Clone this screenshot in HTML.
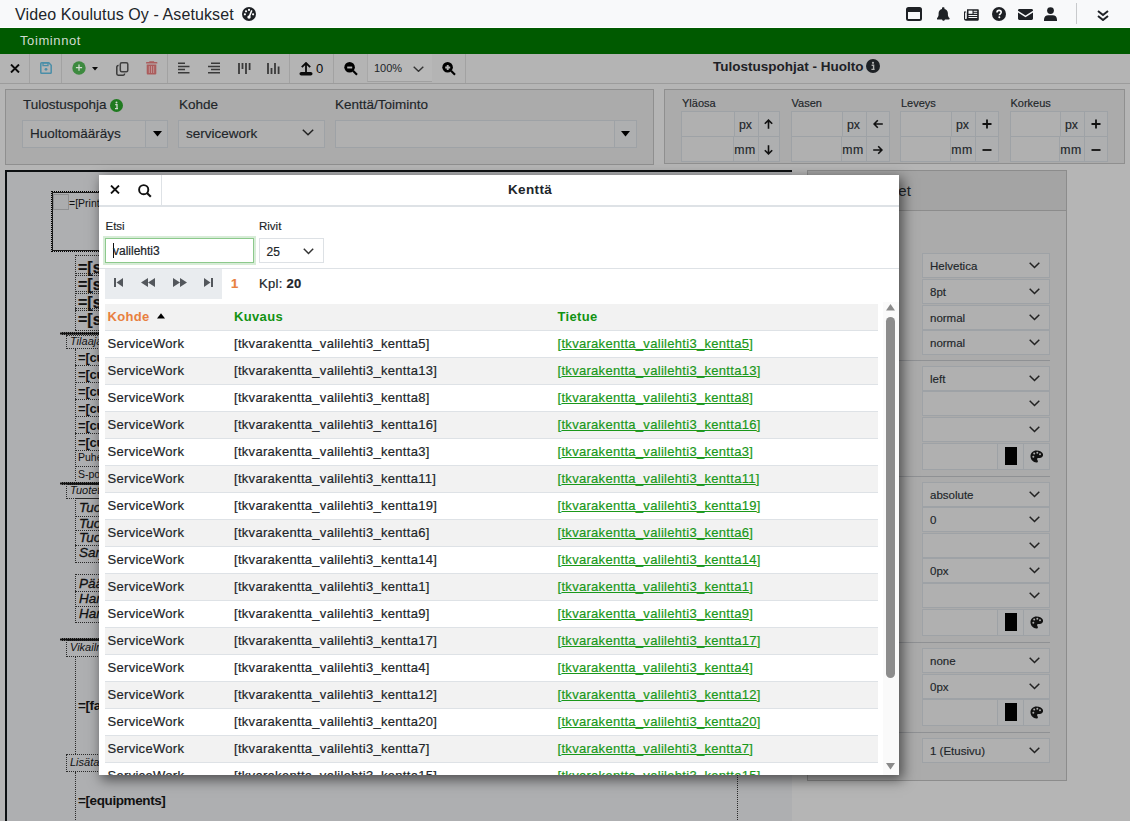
<!DOCTYPE html>
<html><head><meta charset="utf-8">
<style>
*{box-sizing:border-box;margin:0;padding:0}
html,body{width:1130px;height:821px;overflow:hidden}
body{position:relative;background:#b5b5b5;font-family:"Liberation Sans",sans-serif;color:#212529}
.a{position:absolute}
svg{display:block}
/* header */
#hdr{left:0;top:0;width:1130px;height:28px;background:#f8f9fa;border-bottom:1px solid #fff}
#title{left:15px;top:5px;font-size:16px;line-height:20px;color:#212529;letter-spacing:0.1px}
#green{left:0;top:28px;width:1130px;height:26px;background:#005a00}
#toim{left:20px;top:33px;font-size:13px;line-height:15px;color:#d0dbd0;letter-spacing:.6px}
/* toolbar */
#tb{left:0;top:54px;width:1130px;height:30px;background:#b4b4b4;border-bottom:1px solid #9c9c9c}
.dv{top:54px;width:1px;height:29px;background:#a2a2a2}
/* panels */
.pnl{background:#ababab;border:1px solid #8f8f8f}
.lbl{font-size:13.5px;line-height:16px;color:#212529;-webkit-text-stroke:.15px currentColor}
.sel{background:#b0b0b0;border:1px solid #9ea2a6}
.sm{font-size:11.5px;line-height:14px;color:#212529;-webkit-text-stroke:.15px currentColor}
.ig{border:1px solid #9ea2a6;background:#b0b0b0}
.cv{font-family:"Liberation Sans",sans-serif;line-height:14px;color:#111}
.cvb{font-size:16px;font-weight:bold;line-height:17px;color:#111;-webkit-text-stroke:.2px #111}
.cvb3{font-size:13px;font-weight:bold;line-height:15px;color:#111;letter-spacing:-.2px}
.cvb2{font-size:13.5px;font-weight:bold;line-height:15px;color:#111;letter-spacing:-.4px}
.cvi{font-size:11px;font-style:italic;line-height:13px;color:#111}
.cvi2{font-size:13.5px;font-style:italic;line-height:14px;color:#111;-webkit-text-stroke:.3px #111}
.ad{background:#aeafb0;border-left:1px solid #9ea2a6}

#modal{left:99px;top:175px;width:800px;height:600px;background:#fff;box-shadow:3px 4px 12px 1px rgba(0,0,0,.55);overflow:hidden}
.mt{font-size:13px;line-height:15px;color:#212529;letter-spacing:.3px;-webkit-text-stroke:.2px currentColor}
.ml{font-size:11.5px;line-height:13px;color:#212529;-webkit-text-stroke:.15px currentColor}
.th{font-size:13px;line-height:15px;font-weight:bold;letter-spacing:.35px}
.lnk{color:#1a981a}
.lnk u{text-decoration:underline;text-decoration-thickness:1px;text-underline-offset:1px}
</style></head><body>
<div id="hdr" class="a"></div>
<div id="title" class="a">Video Koulutus Oy - Asetukset</div>
<div id="green" class="a"></div>
<div id="toim" class="a">Toiminnot</div>

<div id="tb" class="a"></div>

<!-- header icons -->
<svg class="a" style="left:242px;top:6.5px" width="14" height="14" viewBox="0 0 14 14"><circle cx="7" cy="7" r="7" fill="#1e2125"/><circle cx="7" cy="2.9" r="1.1" fill="#fff"/><circle cx="4" cy="4.3" r="1.1" fill="#fff"/><circle cx="2.9" cy="7.3" r="1.1" fill="#fff"/><circle cx="11.1" cy="7.3" r="1.1" fill="#fff"/><path d="M9.8 3.4 L7.3 9.6" stroke="#fff" stroke-width="1.5"/><circle cx="7" cy="10.1" r="1.7" fill="#fff"/></svg>

<svg class="a" style="left:906px;top:7px" width="16" height="14" viewBox="0 0 16 14"><rect x="1" y="1" width="14" height="12" rx="1.5" fill="none" stroke="#1e2125" stroke-width="2"/><rect x="1" y="1" width="14" height="4" fill="#1e2125"/></svg>
<svg class="a" style="left:936.5px;top:7px" width="13" height="14" viewBox="0 0 13 14"><path d="M6.5 0.3c.6 0 1 .4 1 1v.6c2 .4 3.4 2.2 3.4 4.3v1.2c0 1.3.5 2.5 1.3 3.4l.3.4c.2.2.2.5.1.8-.1.3-.4.4-.7.4H.6c-.3 0-.6-.2-.7-.4-.1-.3-.1-.6.1-.8l.3-.4c.8-.9 1.3-2.1 1.3-3.4V6.2c0-2.1 1.5-3.900 3.4-4.3v-.6c0-.6.4-1 1-1zM8 12.2c0 .8-.7 1.5-1.5 1.5S5 13 5 12.2z" fill="#1e2125"/></svg>
<svg class="a" style="left:964px;top:7.5px" width="15" height="13" viewBox="0 0 15 13"><path d="M3 1.2h10.8c.6 0 1 .4 1 1v9c0 .9-.7 1.6-1.6 1.6H2c-1.1 0-2-.9-2-2V3.5h2.2v7.3h.8V1.2z" fill="#1e2125"/><rect x="4.5" y="2.6" width="4" height="3.2" fill="#f8f9fa"/><rect x="9.6" y="2.8" width="3.6" height="1" fill="#f8f9fa"/><rect x="9.6" y="4.8" width="3.6" height="1" fill="#f8f9fa"/><rect x="4.5" y="7" width="8.7" height="1" fill="#f8f9fa"/><rect x="4.5" y="9" width="8.7" height="1" fill="#f8f9fa"/><rect x="1" y="4.5" width="0.9" height="6.5" fill="#f8f9fa"/></svg>
<svg class="a" style="left:991.5px;top:7px" width="14" height="14" viewBox="0 0 14 14"><circle cx="7" cy="7" r="7" fill="#1e2125"/><path d="M5 5.4c0-1.2.9-2 2.1-2 1.2 0 2.1.8 2.1 1.9 0 1.5-1.8 1.5-1.8 2.9" stroke="#fff" stroke-width="1.6" fill="none"/><circle cx="7.3" cy="10.2" r="1" fill="#fff"/></svg>
<svg class="a" style="left:1017.5px;top:8.5px" width="15" height="11" viewBox="0 0 15 11"><path d="M1.4 0h12.2c.8 0 1.4.6 1.4 1.4v.4L7.5 6.6 0 1.8v-.4C0 .6.6 0 1.4 0zM0 3.4l7.5 4.8L15 3.4v6.2c0 .8-.6 1.4-1.4 1.4H1.4C.6 11 0 10.4 0 9.6z" fill="#1e2125"/></svg>
<svg class="a" style="left:1044px;top:7px" width="13" height="14" viewBox="0 0 13 14"><circle cx="6.5" cy="3.6" r="3.4" fill="#1e2125"/><path d="M0 14v-1.6C0 9.9 2 8.3 4.2 8.3h4.6c2.3 0 4.2 1.6 4.2 4.1V14z" fill="#1e2125"/></svg>
<div class="a" style="left:1076px;top:3px;width:1px;height:21px;background:#c8cacc"></div>
<svg class="a" style="left:1097px;top:9.5px" width="12" height="11" viewBox="0 0 12 11"><path d="M1 1l5 4 5-4M1 6l5 4 5-4" stroke="#1e2125" stroke-width="2" fill="none"/></svg>

<!-- toolbar -->
<div class="a dv" style="left:29px"></div>
<div class="a dv" style="left:61px"></div>
<div class="a dv" style="left:167px"></div>
<div class="a dv" style="left:289px"></div>
<div class="a dv" style="left:333px"></div>
<div class="a dv" style="left:465px"></div>
<svg class="a" style="left:10px;top:63.5px" width="10" height="9" viewBox="0 0 10 9"><path d="M1 0.5l8 8M9 0.5l-8 8" stroke="#0a0a0a" stroke-width="1.9"/></svg>
<svg class="a" style="left:40px;top:62px" width="12" height="12" viewBox="0 0 12 12"><path d="M1.6 .8h7.2l2.4 2.4v7.2c0 .5-.4.8-.8.8H1.6c-.5 0-.8-.4-.8-.8V1.6c0-.5.4-.8.8-.8z" fill="none" stroke="#4a8ea8" stroke-width="1.5"/><rect x="3" y="1" width="5" height="2.6" fill="none" stroke="#4a8ea8" stroke-width="1.3"/><circle cx="6" cy="7.3" r="1.4" fill="#4a8ea8"/></svg>
<svg class="a" style="left:71.5px;top:61px" width="14" height="14" viewBox="0 0 14 14"><circle cx="7" cy="7" r="6.7" fill="#3d8a3f"/><path d="M7 3.6v6.2M3.9 6.7h6.2" stroke="#d2ddd2" stroke-width="1.3"/></svg>
<svg class="a" style="left:92px;top:66.8px" width="6" height="4" viewBox="0 0 6 4"><path d="M0 0h6L3 3.4z" fill="#0a0a0a"/></svg>
<svg class="a" style="left:115.5px;top:61.5px" width="13" height="14" viewBox="0 0 13 14"><rect x="4.3" y="0.8" width="7.5" height="9" rx="1.5" fill="none" stroke="#404040" stroke-width="1.5"/><path d="M2.6 3.6h-.4c-.8 0-1.4.6-1.4 1.4v6.8c0 .8.6 1.4 1.4 1.4h5c.8 0 1.4-.6 1.4-1.4v-.4" fill="none" stroke="#3a3a3a" stroke-width="1.5"/></svg>
<svg class="a" style="left:146px;top:61.3px" width="12" height="14" viewBox="0 0 12 14"><path d="M3.6 .2h4.2l.6 .9h2.3c.4 0 .7.3.7.7v.4c0 .2-.2.4-.4.4H.4C.2 2.6 0 2.400 0 2.200v-.4c0-.4.3-.7.7-.7H3z" fill="#ab5c5c"/><path d="M.7 3.600h9.600v9c0 .5-.4.9-.9.9H1.600c-.5 0-.9-.4-.9-.9z" fill="#ab5c5c"/><path d="M3.300 5v7M5.500 5v7M7.700 5v7" stroke="#c39a9a" stroke-width="0.9"/></svg>
<svg class="a" style="left:177.5px;top:62px" width="12" height="12" viewBox="0 0 12 12"><path d="M0 1.2h7M0 4.4h11.5M0 7.6h7M0 10.8h11.5" stroke="#3a3a3a" stroke-width="1.5"/></svg>
<svg class="a" style="left:207.5px;top:62px" width="12" height="12" viewBox="0 0 12 12"><path d="M3 1.2h9M0 4.4h12M3 7.6h9M0 10.8h12" stroke="#3a3a3a" stroke-width="1.5"/></svg>
<svg class="a" style="left:237.5px;top:63px" width="13" height="11" viewBox="0 0 13 11"><path d="M1 0v11M4.5 0v6M8 0v11M11.6 0v7" stroke="#3a3a3a" stroke-width="1.8"/></svg>
<svg class="a" style="left:266.5px;top:63px" width="13" height="11" viewBox="0 0 13 11"><path d="M1 0v11M4.5 5v6M8 0v11M11.6 3.5v7.5" stroke="#3a3a3a" stroke-width="1.8"/></svg>
<svg class="a" style="left:299px;top:61.5px" width="14" height="14" viewBox="0 0 14 14"><path d="M7 1v9" stroke="#0a0a0a" stroke-width="1.8"/><path d="M2.8 5.2L7 1l4.2 4.2" stroke="#0a0a0a" stroke-width="1.8" fill="none"/><rect x="0.5" y="10" width="13" height="3.6" rx="1.8" fill="#0a0a0a"/></svg>
<div class="a" style="left:316px;top:61px;font-size:13px;line-height:15px;color:#0a0a0a">0</div>
<svg class="a" style="left:343.5px;top:61.5px" width="14" height="14" viewBox="0 0 14 14"><circle cx="5.6" cy="5.3" r="5.3" fill="#000"/><path d="M3.2 5.5h5" stroke="#b4b4b4" stroke-width="1.9"/><path d="M9 8.8l4 4" stroke="#000" stroke-width="2.1"/></svg>
<div class="a" style="left:367px;top:54px;width:65px;height:28px;background:#b8b8b8;border-left:1px solid #a8a8a8;border-bottom:1px solid #a0a0a0"></div>
<div class="a" style="left:374px;top:62px;font-size:11px;line-height:13px;color:#212529">100%</div>
<svg class="a" style="left:413px;top:66px" width="11" height="6" viewBox="0 0 11 6"><path d="M.7.7l4.8 4.6L10.3.7" stroke="#333" stroke-width="1.4" fill="none"/></svg>
<svg class="a" style="left:442px;top:61.5px" width="14" height="14" viewBox="0 0 14 14"><circle cx="5.6" cy="5.3" r="5.3" fill="#000"/><path d="M3.2 5.5h5M5.7 3v5" stroke="#b4b4b4" stroke-width="1.9"/><path d="M9 8.8l4 4" stroke="#000" stroke-width="2.1"/></svg>
<div class="a" style="left:713px;top:59px;font-size:13.5px;line-height:16px;font-weight:bold;color:#1e2125">Tulostuspohjat - Huolto</div>
<svg class="a" style="left:866px;top:59px" width="14" height="14" viewBox="0 0 14 14"><circle cx="7" cy="7" r="7" fill="#1e2125"/><circle cx="7" cy="3.8" r="1.1" fill="#b4b4b4"/><path d="M5.6 6.2h2v4.2M5.4 10.4h3.2" stroke="#b4b4b4" stroke-width="1.4" fill="none"/></svg>

<!-- left form panel -->
<div class="a pnl" style="left:5px;top:89px;width:649px;height:76px"></div>
<div class="a lbl" style="left:23px;top:97px">Tulostuspohja</div>
<svg class="a" style="left:110px;top:99px" width="13" height="13" viewBox="0 0 13 13"><circle cx="6.5" cy="6.5" r="6.5" fill="#1f7a1f"/><circle cx="6.5" cy="3.5" r="1" fill="#cfd8cf"/><path d="M5.2 5.7h1.8v3.9M5 9.6h3" stroke="#cfd8cf" stroke-width="1.3" fill="none"/></svg>
<div class="a lbl" style="left:179px;top:97px">Kohde</div>
<div class="a lbl" style="left:335px;top:97px">Kenttä/Toiminto</div>
<div class="a sel" style="left:22px;top:120px;width:146px;height:28px"></div>
<div class="a" style="left:145px;top:121px;width:22px;height:26px;background:#aeafb0;border-left:1px solid #9ea2a6"></div>
<svg class="a" style="left:152.5px;top:131px" width="9" height="6" viewBox="0 0 9 6"><path d="M0 0h9L4.5 5.4z" fill="#000"/></svg>
<div class="a lbl" style="left:30px;top:126px">Huoltomääräys</div>
<div class="a sel" style="left:178px;top:120px;width:147px;height:28px"></div>
<div class="a lbl" style="left:186px;top:126px">servicework</div>
<svg class="a" style="left:302px;top:129px" width="12" height="7" viewBox="0 0 12 7"><path d="M.8.8l5.2 5 5.2-5" stroke="#222" stroke-width="1.5" fill="none"/></svg>
<div class="a sel" style="left:335px;top:120px;width:302px;height:28px"></div>
<div class="a" style="left:614px;top:121px;width:22px;height:26px;background:#aeafb0;border-left:1px solid #9ea2a6"></div>
<svg class="a" style="left:621px;top:131px" width="9" height="6" viewBox="0 0 9 6"><path d="M0 0h9L4.5 5.4z" fill="#000"/></svg>

<!-- right position panel -->
<div class="a pnl" style="left:664px;top:89px;width:461px;height:75px"></div>
<div class="a sm" style="left:682px;top:95.5px;font-size:11px">Yläosa</div>
<div class="a ig" style="left:681px;top:111px;width:98.5px;height:26px"></div>
<div class="a ad" style="left:733.5px;top:112px;width:24.0px;height:24px"></div>
<div class="a ad" style="left:757.5px;top:112px;width:21.0px;height:24px"></div>
<div class="a ig" style="left:681px;top:136px;width:98.5px;height:26px"></div>
<div class="a ad" style="left:732.5px;top:137px;width:25.0px;height:24px"></div>
<div class="a ad" style="left:757.5px;top:137px;width:21.0px;height:24px"></div>
<div class="a sm" style="left:733.5px;top:117.5px;width:24px;text-align:center;font-size:12.3px">px</div>
<div class="a sm" style="left:732.5px;top:142.5px;width:25px;text-align:center;letter-spacing:.4px;font-size:12.3px">mm</div>
<div class="a sm" style="left:791.5px;top:95.5px;font-size:11px">Vasen</div>
<div class="a ig" style="left:790.5px;top:111px;width:99.0px;height:26px"></div>
<div class="a ad" style="left:841.5px;top:112px;width:24.0px;height:24px"></div>
<div class="a ad" style="left:865.5px;top:112px;width:23.0px;height:24px"></div>
<div class="a ig" style="left:790.5px;top:136px;width:99.0px;height:26px"></div>
<div class="a ad" style="left:840.5px;top:137px;width:25.0px;height:24px"></div>
<div class="a ad" style="left:865.5px;top:137px;width:23.0px;height:24px"></div>
<div class="a sm" style="left:841.5px;top:117.5px;width:24px;text-align:center;font-size:12.3px">px</div>
<div class="a sm" style="left:840.5px;top:142.5px;width:25px;text-align:center;letter-spacing:.4px;font-size:12.3px">mm</div>
<div class="a sm" style="left:901px;top:95.5px;font-size:11px">Leveys</div>
<div class="a ig" style="left:900px;top:111px;width:99px;height:26px"></div>
<div class="a ad" style="left:950.5px;top:112px;width:24.0px;height:24px"></div>
<div class="a ad" style="left:974.5px;top:112px;width:23.5px;height:24px"></div>
<div class="a ig" style="left:900px;top:136px;width:99px;height:26px"></div>
<div class="a ad" style="left:949.5px;top:137px;width:25.0px;height:24px"></div>
<div class="a ad" style="left:974.5px;top:137px;width:23.5px;height:24px"></div>
<div class="a sm" style="left:950.5px;top:117.5px;width:24px;text-align:center;font-size:12.3px">px</div>
<div class="a sm" style="left:949.5px;top:142.5px;width:25px;text-align:center;letter-spacing:.4px;font-size:12.3px">mm</div>
<div class="a sm" style="left:1010.5px;top:95.5px;font-size:11px">Korkeus</div>
<div class="a ig" style="left:1009.5px;top:111px;width:98.5px;height:26px"></div>
<div class="a ad" style="left:1059.5px;top:112px;width:24.0px;height:24px"></div>
<div class="a ad" style="left:1083.5px;top:112px;width:23.5px;height:24px"></div>
<div class="a ig" style="left:1009.5px;top:136px;width:98.5px;height:26px"></div>
<div class="a ad" style="left:1058.5px;top:137px;width:25.0px;height:24px"></div>
<div class="a ad" style="left:1083.5px;top:137px;width:23.5px;height:24px"></div>
<div class="a sm" style="left:1059.5px;top:117.5px;width:24px;text-align:center;font-size:12.3px">px</div>
<div class="a sm" style="left:1058.5px;top:142.5px;width:25px;text-align:center;letter-spacing:.4px;font-size:12.3px">mm</div>
<svg class="a" style="left:763.5px;top:119px" width="10" height="10" viewBox="0 0 10 10"><path d="M4.5 9.8V1.2M.8 4.8L4.5 1.1l3.7 3.7" stroke="#111" stroke-width="1.6" fill="none"/></svg>
<svg class="a" style="left:763.5px;top:144.5px" width="10" height="10" viewBox="0 0 10 10"><path d="M4.5 0.2v8.6M.8 5.2l3.7 3.7 3.7-3.7" stroke="#111" stroke-width="1.6" fill="none"/></svg>
<svg class="a" style="left:872.5px;top:119px" width="10" height="10" viewBox="0 0 10 10"><path d="M9.8 5H1.2M4.8 1.3L1.1 5l3.7 3.7" stroke="#111" stroke-width="1.6" fill="none"/></svg>
<svg class="a" style="left:872.5px;top:144.5px" width="10" height="10" viewBox="0 0 10 10"><path d="M.2 5h8.6M5.2 1.3L8.9 5 5.2 8.7" stroke="#111" stroke-width="1.6" fill="none"/></svg>
<svg class="a" style="left:981.8px;top:119px" width="10" height="10" viewBox="0 0 10 10"><path d="M5 .5v9M.5 5h9" stroke="#111" stroke-width="1.8" fill="none"/></svg>
<svg class="a" style="left:981.8px;top:144.5px" width="10" height="10" viewBox="0 0 10 10"><path d="M.5 5h9" stroke="#111" stroke-width="1.8" fill="none"/></svg>
<svg class="a" style="left:1090.8px;top:119px" width="10" height="10" viewBox="0 0 10 10"><path d="M5 .5v9M.5 5h9" stroke="#111" stroke-width="1.8" fill="none"/></svg>
<svg class="a" style="left:1090.8px;top:144.5px" width="10" height="10" viewBox="0 0 10 10"><path d="M.5 5h9" stroke="#111" stroke-width="1.8" fill="none"/></svg>

<!-- canvas -->
<div class="a" style="left:5px;top:170px;width:787px;height:651px;background:#aeafb1;border-top:2px solid #0d1012;border-left:2px solid #0d1012"></div>
<div class="a" style="left:51px;top:191px;width:300px;height:61px;border:1px dotted #000"></div>
<div class="a" style="left:52px;top:192px;width:298px;height:59px;border:1px solid #1a1a1a"></div>
<div class="a" style="left:53px;top:194px;width:16px;height:16px;border:1px solid #8f9092;background:#abacae"></div>
<div class="a cv" style="left:69px;top:195.5px;font-size:10.5px">=[PrintHeader]</div>
<div class="a" style="left:75px;top:255px;width:400px;height:75px;border-left:1px dotted #2a2a2a;border-top:1px dotted #2a2a2a"></div>
<div class="a" style="left:75px;top:273px;width:400px;height:3px;border-top:1px dotted #2a2a2a;border-bottom:1px dotted #2a2a2a"></div>
<div class="a" style="left:75px;top:290.5px;width:400px;height:3px;border-top:1px dotted #2a2a2a;border-bottom:1px dotted #2a2a2a"></div>
<div class="a" style="left:75px;top:308px;width:400px;height:3px;border-top:1px dotted #2a2a2a;border-bottom:1px dotted #2a2a2a"></div>
<div class="a" style="left:75px;top:329.5px;width:400px;height:3px;border-top:1px dotted #2a2a2a;border-bottom:1px dotted #2a2a2a"></div>
<div class="a cvb" style="left:78px;top:258.75px">=[servicework]</div>
<div class="a cvb" style="left:78px;top:276.25px">=[servicework]</div>
<div class="a cvb" style="left:78px;top:293.75px">=[servicework]</div>
<div class="a cvb" style="left:78px;top:310.75px">=[servicework]</div>
<div class="a" style="left:60px;top:332px;width:400px;height:3px;background:#111;border-top:1px dotted #666;border-bottom:1px dotted #666"></div>
<div class="a" style="left:66px;top:335px;width:100px;height:14px;border:1px dotted #2a2a2a"></div>
<div class="a cvi" style="left:70px;top:334.5px">Tilaaja</div>
<div class="a" style="left:75px;top:349px;width:400px;height:134px;border-left:1px dotted #2a2a2a"></div>
<div class="a" style="left:75px;top:365px;width:400px;height:1px;border-top:1px dotted #2a2a2a"></div>
<div class="a" style="left:75px;top:382px;width:400px;height:1px;border-top:1px dotted #2a2a2a"></div>
<div class="a" style="left:75px;top:399px;width:400px;height:1px;border-top:1px dotted #2a2a2a"></div>
<div class="a" style="left:75px;top:416px;width:400px;height:1px;border-top:1px dotted #2a2a2a"></div>
<div class="a" style="left:75px;top:433px;width:400px;height:1px;border-top:1px dotted #2a2a2a"></div>
<div class="a" style="left:75px;top:449.5px;width:400px;height:1px;border-top:1px dotted #2a2a2a"></div>
<div class="a" style="left:75px;top:466.3px;width:400px;height:1px;border-top:1px dotted #2a2a2a"></div>
<div class="a cvb3" style="left:78px;top:350.0px">=[customer]</div>
<div class="a cvb3" style="left:78px;top:367.0px">=[customer]</div>
<div class="a cvb3" style="left:78px;top:384.0px">=[customer]</div>
<div class="a cvb3" style="left:78px;top:401.0px">=[customer]</div>
<div class="a cvb3" style="left:78px;top:418.0px">=[customer]</div>
<div class="a cvb3" style="left:78px;top:434.8px">=[customer]</div>
<div class="a cv" style="left:78px;top:450.3px;font-size:10.5px">Puhelin</div>
<div class="a cv" style="left:78px;top:467.1px;font-size:10.5px">S-posti</div>
<div class="a" style="left:60px;top:481.5px;width:400px;height:3px;background:#111;border-top:1px dotted #666;border-bottom:1px dotted #666"></div>
<div class="a" style="left:66px;top:484px;width:100px;height:15px;border:1px dotted #2a2a2a"></div>
<div class="a cvi" style="left:70px;top:484px">Tuotetiedot</div>
<div class="a" style="left:75px;top:498px;width:400px;height:65px;border:1px dotted #2a2a2a"></div>
<div class="a" style="left:75px;top:516px;width:400px;height:1px;border-top:1px dotted #2a2a2a"></div>
<div class="a" style="left:75px;top:530px;width:400px;height:1px;border-top:1px dotted #2a2a2a"></div>
<div class="a" style="left:75px;top:545px;width:400px;height:1px;border-top:1px dotted #2a2a2a"></div>
<div class="a cvi2" style="left:79px;top:500.7px">Tuote</div>
<div class="a cvi2" style="left:79px;top:516.8px">Tuote</div>
<div class="a cvi2" style="left:79px;top:530.7px">Tuote</div>
<div class="a cvi2" style="left:79px;top:545.7px">Sarja</div>
<div class="a" style="left:75px;top:574px;width:400px;height:49px;border:1px dotted #2a2a2a"></div>
<div class="a" style="left:75px;top:591px;width:400px;height:1px;border-top:1px dotted #2a2a2a"></div>
<div class="a" style="left:75px;top:606px;width:400px;height:1px;border-top:1px dotted #2a2a2a"></div>
<div class="a cvi2" style="left:79px;top:576.5px">Pääkäyttäjä</div>
<div class="a cvi2" style="left:79px;top:591.5px">Hankinta</div>
<div class="a cvi2" style="left:79px;top:606.5px">Hankinta</div>
<div class="a" style="left:60px;top:637.8px;width:400px;height:3px;background:#111;border-top:1px dotted #666;border-bottom:1px dotted #666"></div>
<div class="a" style="left:66px;top:640px;width:100px;height:17px;border:1px dotted #2a2a2a"></div>
<div class="a cvi" style="left:70px;top:641px">Vikailmoitus</div>
<div class="a" style="left:75px;top:656px;width:1px;height:98px;border-left:1px dotted #2a2a2a"></div>
<div class="a cvb2" style="left:78px;top:698.2px">=[faultdescription]</div>
<div class="a" style="left:66px;top:754px;width:100px;height:18px;border:1px dotted #2a2a2a"></div>
<div class="a cvi" style="left:70px;top:756px">Lisätarvikkeet</div>
<div class="a" style="left:75px;top:772px;width:663px;height:60px;border-left:1px dotted #2a2a2a;border-right:1px dotted #2a2a2a"></div>
<div class="a cvb2" style="left:78px;top:792.6px">=[equipments]</div>

<!-- properties panel -->
<div class="a" style="left:807px;top:170px;width:260px;height:611px;background:#ababab;border:1px solid #8c8c8c"></div>
<div class="a" style="left:808px;top:171px;width:258px;height:40px;background:#a4a4a4;border-bottom:1px solid #8c8c8c"></div>
<div class="a" style="left:845px;top:182px;font-size:15px;line-height:17px;color:#212529">Asetukset</div>
<div class="a" style="left:808px;top:360px;width:242px;height:1px;background:#8f9194"></div>
<div class="a" style="left:808px;top:476px;width:242px;height:1px;background:#8f9194"></div>
<div class="a" style="left:808px;top:642px;width:242px;height:1px;background:#8f9194"></div>
<div class="a" style="left:808px;top:732px;width:242px;height:1px;background:#8f9194"></div>
<div class="a sel" style="left:922px;top:253px;width:128px;height:25px"></div>
<div class="a sm" style="left:930px;top:259px">Helvetica</div>
<svg class="a" style="left:1029px;top:262px" width="11" height="7" viewBox="0 0 11 7"><path d="M.7.7l4.8 4.8L10.3.7" stroke="#222" stroke-width="1.5" fill="none"/></svg>
<div class="a sel" style="left:922px;top:279px;width:128px;height:25px"></div>
<div class="a sm" style="left:930px;top:285px">8pt</div>
<svg class="a" style="left:1029px;top:288px" width="11" height="7" viewBox="0 0 11 7"><path d="M.7.7l4.8 4.8L10.3.7" stroke="#222" stroke-width="1.5" fill="none"/></svg>
<div class="a sel" style="left:922px;top:305px;width:128px;height:25px"></div>
<div class="a sm" style="left:930px;top:311px">normal</div>
<svg class="a" style="left:1029px;top:314px" width="11" height="7" viewBox="0 0 11 7"><path d="M.7.7l4.8 4.8L10.3.7" stroke="#222" stroke-width="1.5" fill="none"/></svg>
<div class="a sel" style="left:922px;top:330px;width:128px;height:25px"></div>
<div class="a sm" style="left:930px;top:336px">normal</div>
<svg class="a" style="left:1029px;top:339px" width="11" height="7" viewBox="0 0 11 7"><path d="M.7.7l4.8 4.8L10.3.7" stroke="#222" stroke-width="1.5" fill="none"/></svg>
<div class="a sel" style="left:922px;top:366px;width:128px;height:25px"></div>
<div class="a sm" style="left:930px;top:372px">left</div>
<svg class="a" style="left:1029px;top:375px" width="11" height="7" viewBox="0 0 11 7"><path d="M.7.7l4.8 4.8L10.3.7" stroke="#222" stroke-width="1.5" fill="none"/></svg>
<div class="a sel" style="left:922px;top:391px;width:128px;height:25px"></div>
<svg class="a" style="left:1029px;top:400px" width="11" height="7" viewBox="0 0 11 7"><path d="M.7.7l4.8 4.8L10.3.7" stroke="#222" stroke-width="1.5" fill="none"/></svg>
<div class="a sel" style="left:922px;top:417px;width:128px;height:25px"></div>
<svg class="a" style="left:1029px;top:426px" width="11" height="7" viewBox="0 0 11 7"><path d="M.7.7l4.8 4.8L10.3.7" stroke="#222" stroke-width="1.5" fill="none"/></svg>
<div class="a sel" style="left:922px;top:443px;width:128px;height:27px"></div>
<div class="a ad" style="left:997px;top:444px;width:27px;height:25px"></div>
<div class="a ad" style="left:1023px;top:444px;width:26px;height:25px"></div>
<div class="a" style="left:1005px;top:447px;width:12px;height:18px;background:#000"></div>
<svg class="a" style="left:1030px;top:450px" width="13" height="13" viewBox="0 0 13 13"><path d="M6.5 0.5C3 .5.5 3 .5 6.3c0 3.300 2.7 6.2 6 6.2.9 0 1.400-.6 1.400-1.3 0-.4-.2-.7-.4-1-.2-.3-.4-.6-.4-1 0-.7.5-1.200 1.200-1.200h1.500c1.800 0 3.300-1.400 3.300-3.200C13.100 2.500 10.100.5 6.500.5z" fill="#111"/><circle cx="3.3" cy="6.8" r="1" fill="#ababab"/><circle cx="4.200" cy="3.600" r="1" fill="#ababab"/><circle cx="7.300" cy="2.800" r="1" fill="#ababab"/><circle cx="10" cy="4.300" r="1" fill="#ababab"/></svg>
<div class="a sel" style="left:922px;top:482px;width:128px;height:25px"></div>
<div class="a sm" style="left:930px;top:488px">absolute</div>
<svg class="a" style="left:1029px;top:491px" width="11" height="7" viewBox="0 0 11 7"><path d="M.7.7l4.8 4.8L10.3.7" stroke="#222" stroke-width="1.5" fill="none"/></svg>
<div class="a sel" style="left:922px;top:507px;width:128px;height:25px"></div>
<div class="a sm" style="left:930px;top:513px">0</div>
<svg class="a" style="left:1029px;top:516px" width="11" height="7" viewBox="0 0 11 7"><path d="M.7.7l4.8 4.8L10.3.7" stroke="#222" stroke-width="1.5" fill="none"/></svg>
<div class="a sel" style="left:922px;top:533px;width:128px;height:25px"></div>
<svg class="a" style="left:1029px;top:542px" width="11" height="7" viewBox="0 0 11 7"><path d="M.7.7l4.8 4.8L10.3.7" stroke="#222" stroke-width="1.5" fill="none"/></svg>
<div class="a sel" style="left:922px;top:558px;width:128px;height:25px"></div>
<div class="a sm" style="left:930px;top:564px">0px</div>
<svg class="a" style="left:1029px;top:567px" width="11" height="7" viewBox="0 0 11 7"><path d="M.7.7l4.8 4.8L10.3.7" stroke="#222" stroke-width="1.5" fill="none"/></svg>
<div class="a sel" style="left:922px;top:583px;width:128px;height:25px"></div>
<svg class="a" style="left:1029px;top:592px" width="11" height="7" viewBox="0 0 11 7"><path d="M.7.7l4.8 4.8L10.3.7" stroke="#222" stroke-width="1.5" fill="none"/></svg>
<div class="a sel" style="left:922px;top:609px;width:128px;height:27px"></div>
<div class="a ad" style="left:997px;top:610px;width:27px;height:25px"></div>
<div class="a ad" style="left:1023px;top:610px;width:26px;height:25px"></div>
<div class="a" style="left:1005px;top:613px;width:12px;height:18px;background:#000"></div>
<svg class="a" style="left:1030px;top:616px" width="13" height="13" viewBox="0 0 13 13"><path d="M6.5 0.5C3 .5.5 3 .5 6.3c0 3.300 2.7 6.2 6 6.2.9 0 1.400-.6 1.400-1.3 0-.4-.2-.7-.4-1-.2-.3-.4-.6-.4-1 0-.7.5-1.200 1.200-1.200h1.500c1.800 0 3.300-1.400 3.300-3.200C13.100 2.500 10.100.5 6.500.5z" fill="#111"/><circle cx="3.3" cy="6.8" r="1" fill="#ababab"/><circle cx="4.200" cy="3.600" r="1" fill="#ababab"/><circle cx="7.300" cy="2.800" r="1" fill="#ababab"/><circle cx="10" cy="4.300" r="1" fill="#ababab"/></svg>
<div class="a sel" style="left:922px;top:648px;width:128px;height:25px"></div>
<div class="a sm" style="left:930px;top:654px">none</div>
<svg class="a" style="left:1029px;top:657px" width="11" height="7" viewBox="0 0 11 7"><path d="M.7.7l4.8 4.8L10.3.7" stroke="#222" stroke-width="1.5" fill="none"/></svg>
<div class="a sel" style="left:922px;top:674px;width:128px;height:25px"></div>
<div class="a sm" style="left:930px;top:680px">0px</div>
<svg class="a" style="left:1029px;top:683px" width="11" height="7" viewBox="0 0 11 7"><path d="M.7.7l4.8 4.8L10.3.7" stroke="#222" stroke-width="1.5" fill="none"/></svg>
<div class="a sel" style="left:922px;top:699px;width:128px;height:27px"></div>
<div class="a ad" style="left:997px;top:700px;width:27px;height:25px"></div>
<div class="a ad" style="left:1023px;top:700px;width:26px;height:25px"></div>
<div class="a" style="left:1005px;top:703px;width:12px;height:18px;background:#000"></div>
<svg class="a" style="left:1030px;top:706px" width="13" height="13" viewBox="0 0 13 13"><path d="M6.5 0.5C3 .5.5 3 .5 6.3c0 3.300 2.7 6.2 6 6.2.9 0 1.400-.6 1.400-1.3 0-.4-.2-.7-.4-1-.2-.3-.4-.6-.4-1 0-.7.5-1.200 1.200-1.200h1.500c1.800 0 3.300-1.400 3.300-3.200C13.100 2.500 10.100.5 6.500.5z" fill="#111"/><circle cx="3.3" cy="6.8" r="1" fill="#ababab"/><circle cx="4.200" cy="3.600" r="1" fill="#ababab"/><circle cx="7.300" cy="2.800" r="1" fill="#ababab"/><circle cx="10" cy="4.300" r="1" fill="#ababab"/></svg>
<div class="a sel" style="left:922px;top:738px;width:128px;height:25px"></div>
<div class="a sm" style="left:930px;top:744px">1 (Etusivu)</div>
<svg class="a" style="left:1029px;top:747px" width="11" height="7" viewBox="0 0 11 7"><path d="M.7.7l4.8 4.8L10.3.7" stroke="#222" stroke-width="1.5" fill="none"/></svg>

<!-- modal -->
<div id="modal" class="a">
<div class="a" style="left:0;top:30px;width:800px;height:2px;background:#dee2e6"></div>
<div class="a" style="left:62px;top:0;width:1px;height:30px;background:#dee2e6"></div>
<svg class="a" style="left:11px;top:10px" width="10" height="9" viewBox="0 0 10 9"><path d="M1 .5l8 8M9 .5l-8 8" stroke="#111" stroke-width="1.8"/></svg>
<svg class="a" style="left:38.5px;top:9px" width="14" height="14" viewBox="0 0 14 14"><circle cx="5.7" cy="5.7" r="4.6" fill="none" stroke="#111" stroke-width="1.9"/><path d="M9 9l3.8 3.8" stroke="#111" stroke-width="2.1"/></svg>
<div class="a th" style="left:409px;top:6.5px;color:#212529;font-size:13.5px">Kenttä</div>
<div class="a ml" style="left:6.5px;top:45px">Etsi</div>
<div class="a ml" style="left:160px;top:45px">Rivit</div>
<div class="a" style="left:3.5px;top:61px;width:153px;height:29px;background:#d7ecd7"></div>
<div class="a" style="left:6px;top:63px;width:149px;height:25px;background:#fff;border:1px solid #8cc98c"></div>
<div class="a" style="left:13.5px;top:68px;width:1px;height:15px;background:#111"></div>
<div class="a mt" style="left:14px;top:69px;font-size:12px;letter-spacing:0">valilehti3</div>
<div class="a" style="left:160px;top:63px;width:65px;height:25px;border:1px solid #dde1e5"></div>
<div class="a mt" style="left:167.5px;top:70px;font-size:12px;letter-spacing:0">25</div>
<svg class="a" style="left:203.5px;top:73px" width="11" height="7" viewBox="0 0 11 7"><path d="M.8.8l4.7 4.7L10.2.8" stroke="#333" stroke-width="1.5" fill="none"/></svg>
<div class="a" style="left:0;top:93px;width:800px;height:1px;background:#dee2e6"></div>
<div class="a" style="left:6px;top:94px;width:117px;height:30px;background:#e9ecef"></div>
<svg class="a" style="left:15px;top:102.8px" width="10" height="10" viewBox="0 0 10 10"><rect x="0" y="0" width="2" height="9" fill="#53575c"/><path d="M9 0v9L2.5 4.5z" fill="#53575c"/></svg>
<svg class="a" style="left:42px;top:102.8px" width="14" height="10" viewBox="0 0 14 10"><path d="M7 0v9L0 4.5zM14 0v9L7 4.5z" fill="#53575c"/></svg>
<svg class="a" style="left:73.5px;top:102.8px" width="14" height="10" viewBox="0 0 14 10"><path d="M0 0v9l7-4.5zM7 0v9l7-4.5z" fill="#53575c"/></svg>
<svg class="a" style="left:105px;top:102.8px" width="10" height="10" viewBox="0 0 10 10"><path d="M0 0v9l6.5-4.5z" fill="#53575c"/><rect x="7" y="0" width="2" height="9" fill="#53575c"/></svg>
<div class="a mt" style="left:132px;top:101px;color:#e8803f;font-weight:bold">1</div>
<div class="a mt" style="left:160px;top:101px">Kpl: <b>20</b></div>
<div class="a" style="left:6px;top:129px;width:773px;height:27px;background:#f2f2f2;border-bottom:1px solid #dee2e6"></div>
<div class="a th" style="left:8.5px;top:134px;color:#e8803f">Kohde</div>
<svg class="a" style="left:57.5px;top:137.8px" width="8" height="6" viewBox="0 0 8 6"><path d="M0 5.6h8L4 .2z" fill="#000"/></svg>
<div class="a th" style="left:135px;top:134px;color:#129212">Kuvaus</div>
<div class="a th" style="left:458.5px;top:134px;color:#129212">Tietue</div>
<div class="a" style="left:6px;top:156px;width:773px;height:27px;background:#fff;border-bottom:1px solid #dee2e6"></div>
<div class="a mt" style="left:8.5px;top:161.3px">ServiceWork</div>
<div class="a mt" style="left:135px;top:161.3px">[tkvarakentta_valilehti3_kentta5]</div>
<div class="a mt lnk" style="left:458.5px;top:161.3px">[<u>tkvarakentta_valilehti3_kentta5</u>]</div>
<div class="a" style="left:6px;top:183px;width:773px;height:27px;background:#f2f2f2;border-bottom:1px solid #dee2e6"></div>
<div class="a mt" style="left:8.5px;top:188.3px">ServiceWork</div>
<div class="a mt" style="left:135px;top:188.3px">[tkvarakentta_valilehti3_kentta13]</div>
<div class="a mt lnk" style="left:458.5px;top:188.3px">[<u>tkvarakentta_valilehti3_kentta13</u>]</div>
<div class="a" style="left:6px;top:210px;width:773px;height:27px;background:#fff;border-bottom:1px solid #dee2e6"></div>
<div class="a mt" style="left:8.5px;top:215.3px">ServiceWork</div>
<div class="a mt" style="left:135px;top:215.3px">[tkvarakentta_valilehti3_kentta8]</div>
<div class="a mt lnk" style="left:458.5px;top:215.3px">[<u>tkvarakentta_valilehti3_kentta8</u>]</div>
<div class="a" style="left:6px;top:237px;width:773px;height:27px;background:#f2f2f2;border-bottom:1px solid #dee2e6"></div>
<div class="a mt" style="left:8.5px;top:242.3px">ServiceWork</div>
<div class="a mt" style="left:135px;top:242.3px">[tkvarakentta_valilehti3_kentta16]</div>
<div class="a mt lnk" style="left:458.5px;top:242.3px">[<u>tkvarakentta_valilehti3_kentta16</u>]</div>
<div class="a" style="left:6px;top:264px;width:773px;height:27px;background:#fff;border-bottom:1px solid #dee2e6"></div>
<div class="a mt" style="left:8.5px;top:269.3px">ServiceWork</div>
<div class="a mt" style="left:135px;top:269.3px">[tkvarakentta_valilehti3_kentta3]</div>
<div class="a mt lnk" style="left:458.5px;top:269.3px">[<u>tkvarakentta_valilehti3_kentta3</u>]</div>
<div class="a" style="left:6px;top:291px;width:773px;height:27px;background:#f2f2f2;border-bottom:1px solid #dee2e6"></div>
<div class="a mt" style="left:8.5px;top:296.3px">ServiceWork</div>
<div class="a mt" style="left:135px;top:296.3px">[tkvarakentta_valilehti3_kentta11]</div>
<div class="a mt lnk" style="left:458.5px;top:296.3px">[<u>tkvarakentta_valilehti3_kentta11</u>]</div>
<div class="a" style="left:6px;top:318px;width:773px;height:27px;background:#fff;border-bottom:1px solid #dee2e6"></div>
<div class="a mt" style="left:8.5px;top:323.3px">ServiceWork</div>
<div class="a mt" style="left:135px;top:323.3px">[tkvarakentta_valilehti3_kentta19]</div>
<div class="a mt lnk" style="left:458.5px;top:323.3px">[<u>tkvarakentta_valilehti3_kentta19</u>]</div>
<div class="a" style="left:6px;top:345px;width:773px;height:27px;background:#f2f2f2;border-bottom:1px solid #dee2e6"></div>
<div class="a mt" style="left:8.5px;top:350.3px">ServiceWork</div>
<div class="a mt" style="left:135px;top:350.3px">[tkvarakentta_valilehti3_kentta6]</div>
<div class="a mt lnk" style="left:458.5px;top:350.3px">[<u>tkvarakentta_valilehti3_kentta6</u>]</div>
<div class="a" style="left:6px;top:372px;width:773px;height:27px;background:#fff;border-bottom:1px solid #dee2e6"></div>
<div class="a mt" style="left:8.5px;top:377.3px">ServiceWork</div>
<div class="a mt" style="left:135px;top:377.3px">[tkvarakentta_valilehti3_kentta14]</div>
<div class="a mt lnk" style="left:458.5px;top:377.3px">[<u>tkvarakentta_valilehti3_kentta14</u>]</div>
<div class="a" style="left:6px;top:399px;width:773px;height:27px;background:#f2f2f2;border-bottom:1px solid #dee2e6"></div>
<div class="a mt" style="left:8.5px;top:404.3px">ServiceWork</div>
<div class="a mt" style="left:135px;top:404.3px">[tkvarakentta_valilehti3_kentta1]</div>
<div class="a mt lnk" style="left:458.5px;top:404.3px">[<u>tkvarakentta_valilehti3_kentta1</u>]</div>
<div class="a" style="left:6px;top:426px;width:773px;height:27px;background:#fff;border-bottom:1px solid #dee2e6"></div>
<div class="a mt" style="left:8.5px;top:431.3px">ServiceWork</div>
<div class="a mt" style="left:135px;top:431.3px">[tkvarakentta_valilehti3_kentta9]</div>
<div class="a mt lnk" style="left:458.5px;top:431.3px">[<u>tkvarakentta_valilehti3_kentta9</u>]</div>
<div class="a" style="left:6px;top:453px;width:773px;height:27px;background:#f2f2f2;border-bottom:1px solid #dee2e6"></div>
<div class="a mt" style="left:8.5px;top:458.3px">ServiceWork</div>
<div class="a mt" style="left:135px;top:458.3px">[tkvarakentta_valilehti3_kentta17]</div>
<div class="a mt lnk" style="left:458.5px;top:458.3px">[<u>tkvarakentta_valilehti3_kentta17</u>]</div>
<div class="a" style="left:6px;top:480px;width:773px;height:27px;background:#fff;border-bottom:1px solid #dee2e6"></div>
<div class="a mt" style="left:8.5px;top:485.3px">ServiceWork</div>
<div class="a mt" style="left:135px;top:485.3px">[tkvarakentta_valilehti3_kentta4]</div>
<div class="a mt lnk" style="left:458.5px;top:485.3px">[<u>tkvarakentta_valilehti3_kentta4</u>]</div>
<div class="a" style="left:6px;top:507px;width:773px;height:27px;background:#f2f2f2;border-bottom:1px solid #dee2e6"></div>
<div class="a mt" style="left:8.5px;top:512.3px">ServiceWork</div>
<div class="a mt" style="left:135px;top:512.3px">[tkvarakentta_valilehti3_kentta12]</div>
<div class="a mt lnk" style="left:458.5px;top:512.3px">[<u>tkvarakentta_valilehti3_kentta12</u>]</div>
<div class="a" style="left:6px;top:534px;width:773px;height:27px;background:#fff;border-bottom:1px solid #dee2e6"></div>
<div class="a mt" style="left:8.5px;top:539.3px">ServiceWork</div>
<div class="a mt" style="left:135px;top:539.3px">[tkvarakentta_valilehti3_kentta20]</div>
<div class="a mt lnk" style="left:458.5px;top:539.3px">[<u>tkvarakentta_valilehti3_kentta20</u>]</div>
<div class="a" style="left:6px;top:561px;width:773px;height:27px;background:#f2f2f2;border-bottom:1px solid #dee2e6"></div>
<div class="a mt" style="left:8.5px;top:566.3px">ServiceWork</div>
<div class="a mt" style="left:135px;top:566.3px">[tkvarakentta_valilehti3_kentta7]</div>
<div class="a mt lnk" style="left:458.5px;top:566.3px">[<u>tkvarakentta_valilehti3_kentta7</u>]</div>
<div class="a" style="left:6px;top:588px;width:773px;height:27px;background:#fff;border-bottom:1px solid #dee2e6"></div>
<div class="a mt" style="left:8.5px;top:593.3px">ServiceWork</div>
<div class="a mt" style="left:135px;top:593.3px">[tkvarakentta_valilehti3_kentta15]</div>
<div class="a mt lnk" style="left:458.5px;top:593.3px">[<u>tkvarakentta_valilehti3_kentta15</u>]</div>

<div class="a" style="left:784px;top:127px;width:16px;height:473px;background:#fafafa"></div>
<svg class="a" style="left:787px;top:129px" width="9" height="7" viewBox="0 0 9 7"><path d="M0 6.6h9L4.5 0z" fill="#8a8a8a"/></svg>
<div class="a" style="left:787px;top:142px;width:9px;height:361px;background:#8c8c8c;border-radius:4.5px"></div>
<svg class="a" style="left:787px;top:588px" width="9" height="7" viewBox="0 0 9 7"><path d="M0 0h9L4.5 6.6z" fill="#8a8a8a"/></svg>
</div>
</body></html>
